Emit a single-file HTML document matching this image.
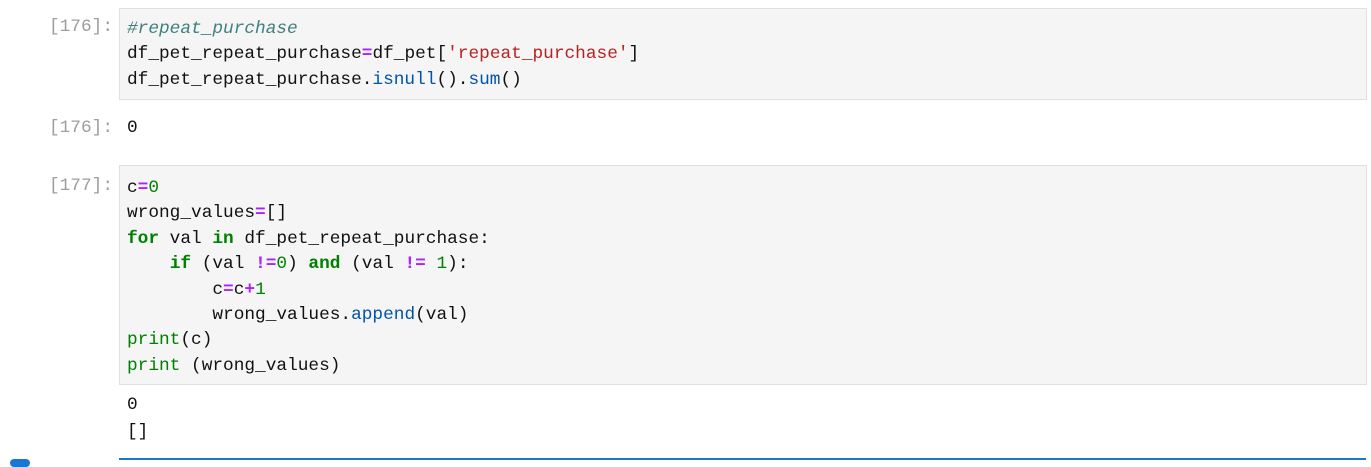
<!DOCTYPE html>
<html><head><style>
body{margin:0;background:#fff;width:1371px;height:461px;overflow:hidden;position:relative;font-family:"Liberation Mono","DejaVu Sans Mono",monospace;font-size:17.8px;}
.p{position:absolute;right:1258px;color:#9e9e9e;line-height:25.4px;}
.box{position:absolute;left:119px;width:1246px;background:#f5f5f5;border:1px solid #e0e0e0;}
pre{margin:0;font:inherit;line-height:25.4px;color:#111;padding-left:7px;}
.c{color:#408080;font-style:italic}.o{color:#aa22ff;font-weight:bold}.s{color:#ba2121}.n{color:#008000}.k{color:#008000;font-weight:bold}.m{color:#0055aa}
.out{position:absolute;left:127px;line-height:27px;}
</style></head><body>
<div class="p" style="top:15px">[176]:</div>
<div class="box" style="top:8px;height:90px"><pre style="padding-top:8px"><span class="c">#repeat_purchase</span>
df_pet_repeat_purchase<span class="o">=</span>df_pet[<span class="s">'repeat_purchase'</span>]
df_pet_repeat_purchase.<span class="m">isnull</span>().<span class="m">sum</span>()</pre></div>
<div class="p" style="top:116px">[176]:</div>
<pre class="out" style="top:115px;padding:0">0</pre>
<div class="p" style="top:174px">[177]:</div>
<div class="box" style="top:165px;height:218px"><pre style="padding-top:10px">c<span class="o">=</span><span class="n">0</span>
wrong_values<span class="o">=</span>[]
<span class="k">for</span> val <span class="k">in</span> df_pet_repeat_purchase:
    <span class="k">if</span> (val <span class="o">!=</span><span class="n">0</span>) <span class="k">and</span> (val <span class="o">!=</span> <span class="n">1</span>):
        c<span class="o">=</span>c<span class="o">+</span><span class="n">1</span>
        wrong_values.<span class="m">append</span>(val)
<span class="n">print</span>(c)
<span class="n">print</span> (wrong_values)</pre></div>
<pre class="out" style="top:392px;padding:0">0
[]</pre>
<div style="position:absolute;left:119px;top:458px;width:1247px;height:2px;background:#1976d2"></div>
<div style="position:absolute;left:10px;top:459px;width:20px;height:8px;border-radius:4px;background:#1976d2"></div>
</body></html>
